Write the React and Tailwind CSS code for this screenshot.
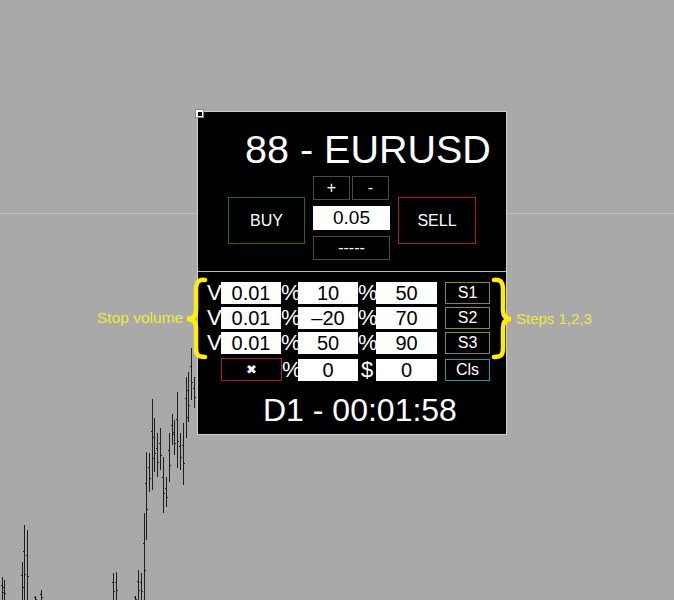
import React from 'react'

// chart bars: [x, high, low]
const bars = [
  [2, 577, 600], [4, 580, 600], [22, 562, 600], [24, 525, 600], [27, 530, 600],
  [35, 596, 600], [41, 590, 600], [113, 573, 600], [116, 572, 600], [135, 596, 600],
  [138, 570, 600], [141, 573, 600], [144, 513, 600], [146, 452, 540], [149, 453, 492],
  [152, 399, 490], [154, 418, 472], [157, 433, 477], [160, 428, 470], [163, 457, 513],
  [166, 477, 507], [169, 433, 482], [172, 414, 445], [174, 420, 455], [177, 392, 468],
  [180, 433, 470], [183, 423, 485], [186, 377, 438], [188, 372, 422], [191, 348, 400],
  [194, 377, 408],
]

const font = { fontFamily: '"Liberation Sans", Arial, sans-serif' }

function Chart() {
  return (
    <svg className="absolute inset-0" width="674" height="600">
      <line x1="0" y1="213.5" x2="674" y2="213.5" stroke="#c2c2c2" strokeWidth="1" />
      {bars.map(([x, hi, lo], i) => {
        const o = Math.round(hi + (lo - hi) * 0.35) + 0.5
        const c = Math.round(hi + (lo - hi) * 0.65) + 0.5
        return (
          <g key={i} stroke="#1e1e1e" strokeWidth="1">
            <line x1={x + 0.5} y1={hi} x2={x + 0.5} y2={lo} />
            <line x1={x - 1} y1={o} x2={x} y2={o} />
            <line x1={x + 1} y1={c} x2={x + 2} y2={c} />
          </g>
        )
      })}
    </svg>
  )
}

function Cell({ children, className = '' }) {
  return (
    <div className={`h-[22px] bg-white text-black text-[20px] leading-[22px] text-center ${className}`}>
      {children}
    </div>
  )
}

function Label({ children, w }) {
  return (
    <div className={`${w} h-[22px] text-white text-[22px] leading-[22px] whitespace-nowrap`}>{children}</div>
  )
}

function StepBtn({ children, border }) {
  return (
    <div className={`ml-[8px] w-[45px] h-[22px] border ${border} text-white text-[16px] leading-[20px] text-center`}>
      {children}
    </div>
  )
}

const rows = [
  ['0.01', '10', '50', 'S1'],
  ['0.01', '–20', '70', 'S2'],
  ['0.01', '50', '90', 'S3'],
]

export default function App() {
  return (
    <div className="relative w-[674px] h-[600px] bg-[#a9a9a9] overflow-hidden" style={font}>
      <Chart />

      {/* trade panel */}
      <div className="absolute left-[197px] top-[111px] w-[310px] h-[324px] bg-black border border-[#cfcfcf] flex flex-col">
        <div className="mt-[17px] pl-[47px] text-white text-[39.5px] leading-[40px] whitespace-nowrap">88 - EURUSD</div>

        <div className="mt-[7px] pl-[30px] flex items-start gap-[8px]">
          <div className="mt-[21px] w-[77px] h-[47px] border border-[#1e6b1e] text-white text-[16px] flex items-center justify-center">
            BUY
          </div>
          <div className="w-[77px] flex flex-col gap-[6px]">
            <div className="flex gap-[2px]">
              <div className="w-[37px] h-[24px] border border-[#4a4a4a] text-white text-[16px] leading-[22px] text-center">+</div>
              <div className="w-[37px] h-[24px] border border-[#4a4a4a] text-white text-[16px] leading-[22px] text-center">-</div>
            </div>
            <div className="h-[24px] bg-white text-black text-[19px] leading-[24px] text-center">0.05</div>
            <div className="h-[24px] border border-[#4a4a4a] text-white text-[16px] leading-[22px] text-center">-----</div>
          </div>
          <div className="mt-[21px] w-[78px] h-[47px] border border-[#b3161b] text-white text-[16px] flex items-center justify-center">
            SELL
          </div>
        </div>

        <div className="mt-[11px] h-px bg-[#bdbdbd]" />

        <div className="mt-[10px] pl-[9px] flex flex-col gap-[3px]">
          {rows.map(([v, a, b, s]) => (
            <div key={s} className="flex items-center">
              <Label w="w-[14px]">V</Label>
              <Cell className="w-[60px]">{v}</Cell>
              <Label w="w-[17px]">%</Label>
              <Cell className="w-[60px]">{a}</Cell>
              <Label w="w-[18px]">%</Label>
              <Cell className="w-[61px]">{b}</Cell>
              <StepBtn border="border-[#8c8c1c]">{s}</StepBtn>
            </div>
          ))}
          <div className="flex items-center mt-px">
            <div className="w-[14px]" />
            <div
              className="w-[61px] h-[23px] border border-[#b01c1c] text-white text-[13px] leading-[21px] text-center font-bold"
              style={{ fontFamily: '"DejaVu Sans", sans-serif' }}
            >
              ✖
            </div>
            <div className="w-[16px] h-[22px] text-white text-[22px] leading-[22px]">%</div>
            <Cell className="w-[60px]">0</Cell>
            <div className="w-[18px] h-[22px] text-white text-[22px] leading-[22px] text-center">$</div>
            <Cell className="w-[61px]">0</Cell>
            <StepBtn border="border-[#1d9ca6]">Cls</StepBtn>
          </div>
        </div>

        <div className="mt-[13px] pl-[65px] text-white text-[32px] leading-[32px] whitespace-nowrap">D1 - 00:01:58</div>
      </div>

      {/* corner handle */}
      <div className="absolute left-[195px] top-[109px] w-[9px] h-[9px] bg-white border border-[#888]">
        <div className="ml-[2px] mt-[2px] w-[4px] h-[4px] bg-black" />
      </div>

      {/* annotations */}
      <svg className="absolute inset-0 pointer-events-none" width="674" height="600">
        <path
          d="M205,280 C197,279 196,284 196,290 L196,310 C196,316 193,319 187,319 C193,319 196,322 196,328 L196,348 C196,354 197,357 205,357"
          fill="none" stroke="#ffee00" strokeWidth="4.5" strokeLinecap="round"
        />
        <path
          d="M494,280 C502,279 503,284 503,290 L503,310 C503,316 506,319 511,319 C506,319 503,322 503,328 L503,348 C503,354 502,357 494,357"
          fill="none" stroke="#ffee00" strokeWidth="4.5" strokeLinecap="round"
        />
      </svg>
      <div className="absolute left-[97px] top-[309px] text-[15.5px] leading-[18px] text-[#eeea3c] whitespace-nowrap">Stop volume</div>
      <div className="absolute left-[516px] top-[310px] text-[15px] leading-[18px] text-[#eeea3c] whitespace-nowrap">Steps 1,2,3</div>
    </div>
  )
}
